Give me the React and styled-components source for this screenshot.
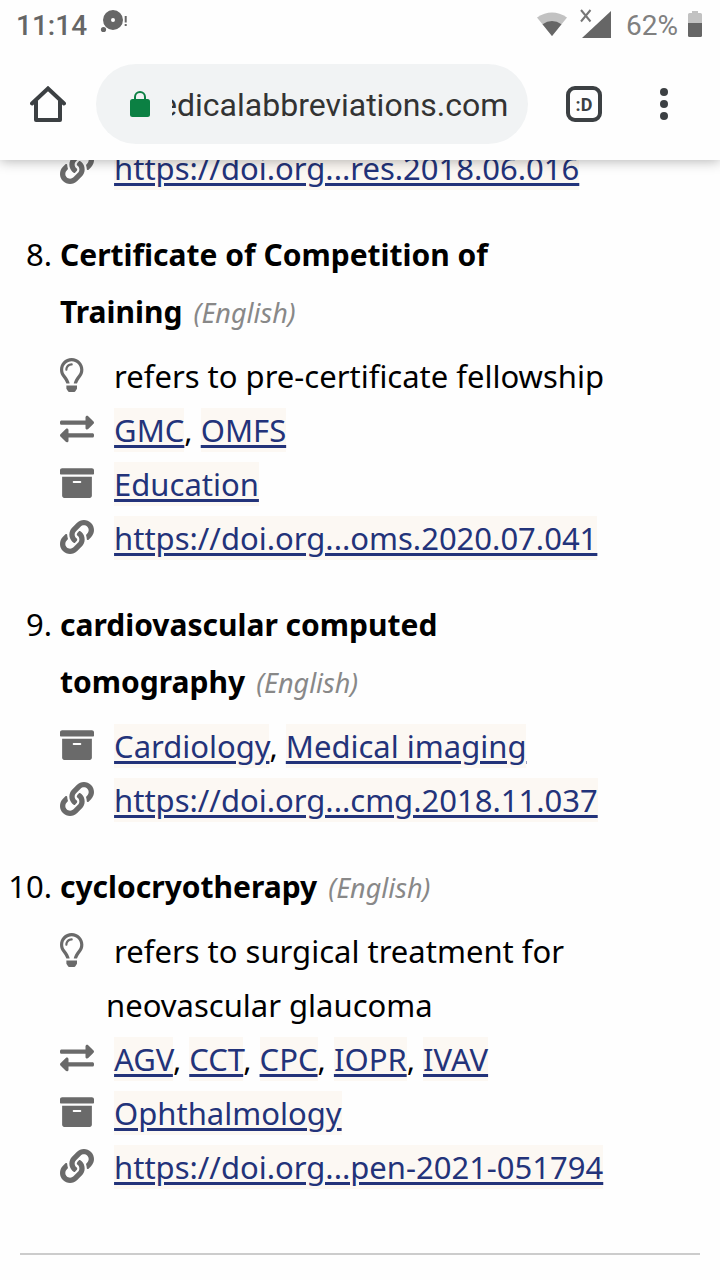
import React, { useEffect, useRef } from 'react';
import styled, { createGlobalStyle } from 'styled-components';
import { FaRegLightbulb, FaExchangeAlt, FaArchive, FaLink } from 'react-icons/fa';

const icons = {
  note: FaRegLightbulb,
  related: FaExchangeAlt,
  category: FaArchive,
  source: FaLink,
};

const entries = [
  {
    rows: [{ type: 'source', links: ['https://doi.org...res.2018.06.016'] }],
  },
  {
    number: 8,
    title: 'Certificate of Competition of Training',
    rows: [
      { type: 'note', text: 'refers to pre-certificate fellowship' },
      { type: 'related', links: ['GMC', 'OMFS'] },
      { type: 'category', links: ['Education'] },
      { type: 'source', links: ['https://doi.org...oms.2020.07.041'] },
    ],
  },
  {
    number: 9,
    title: 'cardiovascular computed tomography',
    rows: [
      { type: 'category', links: ['Cardiology', 'Medical imaging'] },
      { type: 'source', links: ['https://doi.org...cmg.2018.11.037'] },
    ],
  },
  {
    number: 10,
    title: 'cyclocryotherapy',
    rows: [
      { type: 'note', text: 'refers to surgical treatment for neovascular glaucoma' },
      { type: 'related', links: ['AGV', 'CCT', 'CPC', 'IOPR', 'IVAV'] },
      { type: 'category', links: ['Ophthalmology'] },
      { type: 'source', links: ['https://doi.org...pen-2021-051794'] },
    ],
  },
];

function StatusBar() {
  return (
    <Status>
      <Clock>11:14</Clock>
      <svg width="28" height="28" viewBox="0 0 28 28" fill="#666">
        <path fillRule="evenodd" d="M13 0a10 10 0 1 1 0 20a10 10 0 1 1 0-20zM13 8a2 2 0 1 0 0 4a2 2 0 1 0 0-4z" />
        <circle cx="3.5" cy="19.5" r="2.6" />
        <path d="M24.700 6h2v6.500h-2zM24.700 14h2v2h-2z" />
      </svg>
      <Spacer />
      <svg width="30" height="26" viewBox="0 0 30 26">
        <path fill="#c2c2c2" d="M15 25L0 6.500Q15-3.500 30 6.500z" />
        <path fill="#666" d="M15 25L5.500 13.300Q15 6.800 24.500 13.300z" />
      </svg>
      <Signal width="32" height="30" viewBox="0 0 32 30">
        <path fill="#666" d="M31 2v27H2z" />
        <path fill="none" stroke="#777" strokeWidth="2" d="M1 1L10.500 12.500M10.500 1L1 12.500" />
      </Signal>
      <Percent>62%</Percent>
      <svg width="14" height="26" viewBox="0 0 14 26">
        <path fill="#c2c2c2" d="M4 0h6v2h2.500q1.500 0 1.500 1.500V12H0V3.500Q0 2 1.500 2H4z" />
        <path fill="#666" d="M0 12h14v12.500q0 1.500-1.500 1.500h-11Q0 26 0 24.500z" />
      </svg>
    </Status>
  );
}

function Toolbar() {
  const address = useRef(null);

  // keep the end of the domain in view
  useEffect(() => {
    address.current.scrollLeft = address.current.scrollWidth;
  }, []);

  return (
    <Bar>
      <IconButton $width="96px" aria-label="Home">
        <svg width="36" height="36" viewBox="0 0 36 36" fill="none" stroke="#3c4043" strokeWidth="4">
          <path strokeLinecap="round" d="M2 17.500L18 2.500L34 17.500" />
          <path strokeLinejoin="round" d="M6 14.500V34H30V14.500" />
        </svg>
      </IconButton>
      <AddressPill>
        <svg width="20" height="26" viewBox="0 0 20 26">
          <rect y="8" width="20" height="18" rx="2.500" fill="#0b8043" />
          <path fill="none" stroke="#0b8043" strokeWidth="2" d="M5 9V6a5 5 0 0 1 10 0V9" />
        </svg>
        <AddressInput ref={address} aria-label="Address" defaultValue="medicalabbreviations.com" />
      </AddressPill>
      <IconButton $width="80px" aria-label="Tabs">
        <TabCount>:D</TabCount>
      </IconButton>
      <IconButton $width="80px" aria-label="Menu">
        <svg width="8" height="32" viewBox="0 0 8 32" fill="#3c4043">
          <circle cx="4" cy="4" r="4" />
          <circle cx="4" cy="16" r="4" />
          <circle cx="4" cy="28" r="4" />
        </svg>
      </IconButton>
    </Bar>
  );
}

function Entry({ entry }) {
  return (
    <Item>
      <Number>{entry.number && `${entry.number}.`}</Number>
      <div>
        {entry.title && (
          <Title>
            <Name>{entry.title}</Name> <Language>(English)</Language>
          </Title>
        )}
        {entry.rows.map((row) => {
          const Icon = icons[row.type];
          return (
            <Row key={row.type}>
              <IconBox><Icon preserveAspectRatio="xMinYMid meet" /></IconBox>{' '}
              {row.text}
              {row.links && row.links.map((link, i) => (
                <React.Fragment key={link}>
                  {i > 0 && ', '}
                  <Link href="#">{link}</Link>
                </React.Fragment>
              ))}
            </Row>
          );
        })}
      </div>
    </Item>
  );
}

function App() {
  return (
    <Page>
      <GlobalStyle />
      <Header>
        <StatusBar />
        <Toolbar />
      </Header>
      <Content>
        <List>
          {entries.map((entry, i) => (
            <Entry key={i} entry={entry} />
          ))}
        </List>
        <Divider />
      </Content>
    </Page>
  );
}

const GlobalStyle = createGlobalStyle`
*{
    box-sizing:border-box;
}
body{
    margin:0;
    background:#fefefe;
    color:#000;
    font-family:"Noto Sans", sans-serif;
    font-size:31px;
}
svg{
    flex-shrink:0;
}
`
const Page = styled.div`
display:flex;
flex-direction:column;
height:100vh;
`
const Header = styled.header`
position:relative;
z-index:1;
flex-shrink:0;
background:#fefefe;
font-family:Roboto, sans-serif;
box-shadow:0 1px 12px rgba(0, 0, 0, 0.3);
`
const Status = styled.div`
display:flex;
align-items:center;
height:48px;
padding:0 18px 0 16px;
font-size:28px;
color:#666;
`
const Clock = styled.span`
margin-right:13px;
padding-top:2px;
font-weight:500;
`
const Spacer = styled.div`
flex:1;
`
const Signal = styled.svg`
margin:0 14px 0 13px;
`
const Percent = styled.span`
margin-right:10px;
padding-top:2px;
color:#808080;
`
const Bar = styled.div`
display:flex;
align-items:center;
padding:16px 16px 16px 0;
`
const IconButton = styled.button`
display:flex;
align-items:center;
justify-content:center;
width:${(props) => props.$width};
height:80px;
padding:0;
border:0;
background:none;
`
const AddressPill = styled.div`
display:flex;
flex:1;
min-width:0;
align-items:center;
gap:22px;
height:80px;
margin-right:16px;
padding:0 20px 0 34px;
border-radius:40px;
background:#f1f3f4;
`
const AddressInput = styled.input`
flex:1;
min-width:0;
padding:2px 0 0;
border:0;
outline:0;
background:none;
color:#333;
font-family:Roboto, sans-serif;
font-size:32px;
`
const TabCount = styled.span`
display:flex;
align-items:center;
justify-content:center;
width:36px;
height:36px;
border:4px solid #3c4043;
border-radius:9px;
color:#3c4043;
font-family:Roboto, sans-serif;
font-size:18px;
font-weight:700;
`
const Content = styled.main`
flex:1;
min-height:0;
overflow:hidden;
`
const List = styled.ol`
display:flex;
flex-direction:column;
gap:31px;
margin:-19px 0 0;
padding:0 20px 0 0;
list-style:none;
`
const Item = styled.li`
display:grid;
grid-template-columns:52px 1fr;
column-gap:8px;
`
const Number = styled.span`
justify-self:end;
line-height:57px;
`
const Title = styled.div`
max-width:480px;
margin-bottom:9px;
line-height:57px;
`
const Name = styled.strong`
margin-right:3px;
font-size:30px;
line-height:1;
`
const Language = styled.em`
color:#888;
font-size:27px;
line-height:1;
`
const Row = styled.div`
padding-left:46px;
text-indent:-46px;
max-width:580px;
line-height:54px;
`
const IconBox = styled.span`
display:inline-block;
width:46px;
text-indent:0;
line-height:1;
svg{
    height:34px;
    width:34px;
    vertical-align:-4px;
    color:#6a6a6a;
}
`
const Link = styled.a`
padding:1px 0;
background:#fcf8f3;
color:#23337a;
text-decoration-thickness:3px;
text-underline-offset:3px;
`
const Divider = styled.hr`
margin:59px 20px 0;
border:0;
border-top:2px solid #ccc;
`
export default App;
